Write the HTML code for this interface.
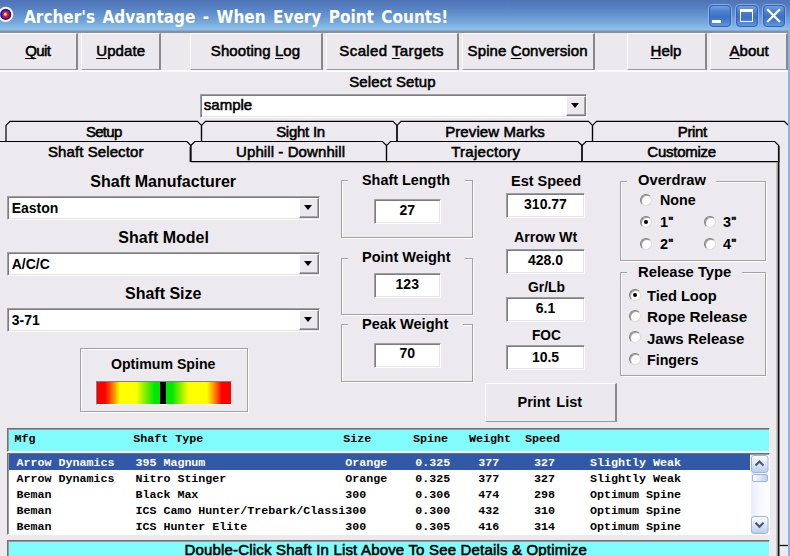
<!DOCTYPE html>
<html><head><meta charset="utf-8"><title>Archer's Advantage</title>
<style>
*{box-sizing:border-box;margin:0;padding:0}
html,body{width:790px;height:556px;overflow:hidden;background:#eceaee;font-family:"Liberation Sans",sans-serif;font-size:15px;color:#000}
.a{position:absolute}
u{text-decoration:underline;text-decoration-skip-ink:none;text-underline-offset:1.5px;text-decoration-thickness:1px}
.tb{background:#ebe9ed;border-top:1px solid #fff;border-left:1px solid #fff;border-right:2px solid #88888c;border-bottom:1.5px solid #98989c}
.sunk{background:#fff;border:1px solid;border-color:#a0a0a4 #fff #fff #a0a0a4;box-shadow:inset 1px 1px 0 #7c7c80,inset -1px -1px 0 #e6e6ea}
.arr{position:absolute;background:#ebe9ed;border:1px solid;border-color:#fff #7e7e82 #7e7e82 #fff;box-shadow:inset -1px -1px 0 #a6a6aa}
.arr:after{content:"";position:absolute;left:3.8px;top:6px;border:4.6px solid transparent;border-top:5px solid #000;border-bottom:0}
.grp{border:1px solid #a2a2a2;box-shadow:1px 1px 0 #fff,inset 1px 1px 0 #fff}
.gap{background:#eceaee;height:3px}
.rad{width:12px;height:12px;border-radius:50%;background:#fff;border:1px solid;border-color:#7c7c7c #dcdcdc #dcdcdc #7c7c7c;box-shadow:inset 1px 1px 0 #a0a0a0}
.dot{width:4px;height:4px;border-radius:50%;background:#000}
</style></head><body>
<div class="a" style="left:0;top:0;width:790px;height:31px;background:linear-gradient(#4f74b6 0%,#5580c2 25%,#6494d0 50%,#78abdc 75%,#8ec2ec 95%,#6f9fe0 100%)"></div>
<svg class="a" style="left:0;top:0" width="16" height="31"><circle cx="5.7" cy="14.4" r="7.6" fill="#fff"/><circle cx="5.7" cy="14.4" r="5.6" fill="#1010e0"/><circle cx="5.7" cy="14.4" r="3.6" fill="#f01020"/><circle cx="5.4" cy="14.2" r="1.6" fill="#fff000"/></svg>
<div class="a" style="left:24px;top:9.04px;font-size:17px;line-height:1;color:#fff;font-family:'DejaVu Sans Condensed','Liberation Sans',sans-serif;white-space:pre;font-weight:bold;word-spacing:2.1px;">Archer's Advantage - When Every Point Counts!</div>
<div class="a" style="left:708.5px;top:4.5px;width:22px;height:22px;border-radius:4px;border:1px solid #3a5eb4;box-shadow:0 0 0 1px rgba(150,190,240,.75);background:linear-gradient(#6d9fe2 0%,#4a7fce 30%,#3c70c4 55%,#4a82d0 80%,#5f98de 100%)"></div>
<div class="a" style="left:735.5px;top:4.5px;width:22px;height:22px;border-radius:4px;border:1px solid #3a5eb4;box-shadow:0 0 0 1px rgba(150,190,240,.75);background:linear-gradient(#6d9fe2 0%,#4a7fce 30%,#3c70c4 55%,#4a82d0 80%,#5f98de 100%)"></div>
<div class="a" style="left:762.5px;top:4.5px;width:22px;height:22px;border-radius:4px;border:1px solid #3a5eb4;box-shadow:0 0 0 1px rgba(150,190,240,.75);background:linear-gradient(#6d9fe2 0%,#4a7fce 30%,#3c70c4 55%,#4a82d0 80%,#5f98de 100%)"></div>
<div class="a" style="left:712px;top:20px;width:9px;height:3px;background:#fff"></div>
<div class="a" style="left:740px;top:9px;width:13px;height:13px;border:1px solid #fff;border-top:3px solid #fff"></div>
<svg class="a" style="left:762px;top:4px" width="24" height="24"><path d="M5.2 5.2 L18 18 M18 5.2 L5.2 18" stroke="#fff" stroke-width="2.3" fill="none"/></svg>
<div class="a" style="left:0;top:31px;width:790px;height:41px;background:#ebe9ed;border-top:2px solid #8e8e90;border-bottom:2px solid #fcfcfd"></div>
<div class="a tb" style="left:-1px;top:33px;width:79px;height:37px"></div>
<div class="a" style="left:-62.2px;top:42.70px;font-size:15px;line-height:1;color:#000;font-family:'Liberation Sans',sans-serif;white-space:pre;-webkit-text-stroke:0.55px #000;letter-spacing:-0.537px;width:200px;text-align:center;"><u>Q</u>uit</div>
<div class="a tb" style="left:81px;top:33px;width:80px;height:37px"></div>
<div class="a" style="left:20.700000000000003px;top:42.70px;font-size:15px;line-height:1;color:#000;font-family:'Liberation Sans',sans-serif;white-space:pre;-webkit-text-stroke:0.55px #000;letter-spacing:0.106px;width:200px;text-align:center;"><u>U</u>pdate</div>
<div class="a tb" style="left:190px;top:33px;width:133px;height:37px"></div>
<div class="a" style="left:155.5px;top:42.70px;font-size:15px;line-height:1;color:#000;font-family:'Liberation Sans',sans-serif;white-space:pre;-webkit-text-stroke:0.55px #000;letter-spacing:0.072px;width:200px;text-align:center;">Shooting <u>L</u>og</div>
<div class="a tb" style="left:326px;top:33px;width:133px;height:37px"></div>
<div class="a" style="left:291.6px;top:42.70px;font-size:15px;line-height:1;color:#000;font-family:'Liberation Sans',sans-serif;white-space:pre;-webkit-text-stroke:0.55px #000;letter-spacing:0.396px;width:200px;text-align:center;">Scaled <u>T</u>argets</div>
<div class="a tb" style="left:462px;top:33px;width:133px;height:37px"></div>
<div class="a" style="left:427.6px;top:42.70px;font-size:15px;line-height:1;color:#000;font-family:'Liberation Sans',sans-serif;white-space:pre;-webkit-text-stroke:0.55px #000;letter-spacing:0.1px;width:200px;text-align:center;">Spine <u>C</u>onversion</div>
<div class="a tb" style="left:627px;top:33px;width:80px;height:37px"></div>
<div class="a" style="left:566px;top:42.70px;font-size:15px;line-height:1;color:#000;font-family:'Liberation Sans',sans-serif;white-space:pre;-webkit-text-stroke:0.55px #000;width:200px;text-align:center;"><u>H</u>elp</div>
<div class="a tb" style="left:710px;top:33px;width:78px;height:37px"></div>
<div class="a" style="left:649.2px;top:42.70px;font-size:15px;line-height:1;color:#000;font-family:'Liberation Sans',sans-serif;white-space:pre;-webkit-text-stroke:0.55px #000;width:200px;text-align:center;"><u>A</u>bout</div>
<div class="a" style="left:349.2px;top:73.80px;font-size:15px;line-height:1;color:#000;font-family:'Liberation Sans',sans-serif;white-space:pre;-webkit-text-stroke:0.55px #000;letter-spacing:0.122px;">Select Setup</div>
<div class="a sunk" style="left:200px;top:94px;width:387px;height:24px"><div class="arr" style="right:0.5px;top:1px;width:19.3px;height:20px"></div></div>
<div class="a" style="left:203.8px;top:96.70px;font-size:15px;line-height:1;-webkit-text-stroke:0.55px #000;color:#000;font-family:'Liberation Sans',sans-serif;white-space:pre;">sample</div>
<svg class="a" style="left:0;top:0" width="790" height="556" fill="none" stroke="#000" stroke-width="1.2"><path d="M6 141.5 L6 125.4 L10 121.4 L197.5 121.4 L201.5 125.4 L201.5 141.5"/><path d="M201.5 141.5 L201.5 125.4 L205.5 121.4 L393 121.4 L397 125.4 L397 141.5"/><path d="M397 141.5 L397 125.4 L401 121.4 L588.5 121.4 L592.5 125.4 L592.5 141.5"/><path d="M592.5 141.5 L592.5 125.4 L596.5 121.4 L784.4 121.4 L788 125"/><path d="M779.5 545.5 L788 545.5" stroke="#111" stroke-width="1.3"/><path d="M190.8 162 L190.8 145.5 L194.8 141.5 L382.5 141.5 L386.5 145.5 L386.5 162"/><path d="M386.5 162 L386.5 145.5 L390.5 141.5 L578 141.5 L582 145.5 L582 162"/><path d="M582 162 L582 145.5 L586 141.5 L774.7 141.5 L778.7 145.5 L778.7 162"/><path d="M0 141.5 L187 141.5 L190.8 145.5 L190.8 162" /><path d="M189.6 147 L189.6 162" stroke="#888" stroke-width="1"/><path d="M190.8 161.7 L778 161.7"/><path d="M778.7 146 L778.7 556" stroke-width="1.6" stroke="#111"/><path d="M777.2 162.5 L777.2 556" stroke="#8c8c8c" stroke-width="1.2"/></svg>
<div class="a" style="left:3.799999999999997px;top:123.60px;font-size:15px;line-height:1;color:#000;font-family:'Liberation Sans',sans-serif;white-space:pre;-webkit-text-stroke:0.55px #000;letter-spacing:-0.675px;width:200px;text-align:center;">Setup</div>
<div class="a" style="left:200.5px;top:123.60px;font-size:15px;line-height:1;color:#000;font-family:'Liberation Sans',sans-serif;white-space:pre;-webkit-text-stroke:0.55px #000;letter-spacing:-0.267px;width:200px;text-align:center;">Sight In</div>
<div class="a" style="left:395px;top:123.60px;font-size:15px;line-height:1;color:#000;font-family:'Liberation Sans',sans-serif;white-space:pre;-webkit-text-stroke:0.55px #000;letter-spacing:0.104px;width:200px;text-align:center;">Preview Marks</div>
<div class="a" style="left:592.3px;top:123.60px;font-size:15px;line-height:1;color:#000;font-family:'Liberation Sans',sans-serif;white-space:pre;-webkit-text-stroke:0.55px #000;letter-spacing:-0.361px;width:200px;text-align:center;">Print</div>
<div class="a" style="left:-4.299999999999997px;top:144.30px;font-size:15px;line-height:1;color:#000;font-family:'Liberation Sans',sans-serif;white-space:pre;-webkit-text-stroke:0.55px #000;letter-spacing:0.099px;width:200px;text-align:center;">Shaft Selector</div>
<div class="a" style="left:190.60000000000002px;top:143.60px;font-size:15px;line-height:1;color:#000;font-family:'Liberation Sans',sans-serif;white-space:pre;-webkit-text-stroke:0.55px #000;letter-spacing:0.085px;width:200px;text-align:center;">Uphill - Downhill</div>
<div class="a" style="left:385.7px;top:143.60px;font-size:15px;line-height:1;color:#000;font-family:'Liberation Sans',sans-serif;white-space:pre;-webkit-text-stroke:0.55px #000;letter-spacing:0.286px;width:200px;text-align:center;">Trajectory</div>
<div class="a" style="left:581.6px;top:143.60px;font-size:15px;line-height:1;color:#000;font-family:'Liberation Sans',sans-serif;white-space:pre;-webkit-text-stroke:0.55px #000;letter-spacing:-0.257px;width:200px;text-align:center;">Customize</div>
<div class="a" style="left:90.3px;top:174.16px;font-size:16px;line-height:1;color:#000;font-family:'Liberation Sans',sans-serif;white-space:pre;font-weight:bold;">Shaft Manufacturer</div>
<div class="a sunk" style="left:7px;top:196px;width:313px;height:24px"><div class="arr" style="right:0.5px;top:1px;width:19.3px;height:20px"></div></div>
<div class="a" style="left:11.7px;top:201.05px;font-size:14px;line-height:1;color:#000;font-family:'Liberation Sans',sans-serif;white-space:pre;font-weight:bold;">Easton</div>
<div class="a" style="left:118.3px;top:230.46px;font-size:16px;line-height:1;color:#000;font-family:'Liberation Sans',sans-serif;white-space:pre;font-weight:bold;">Shaft Model</div>
<div class="a sunk" style="left:7px;top:252px;width:313px;height:24px"><div class="arr" style="right:0.5px;top:1px;width:19.3px;height:20px"></div></div>
<div class="a" style="left:11.7px;top:257.05px;font-size:14px;line-height:1;color:#000;font-family:'Liberation Sans',sans-serif;white-space:pre;font-weight:bold;">A/C/C</div>
<div class="a" style="left:125px;top:286.46px;font-size:16px;line-height:1;color:#000;font-family:'Liberation Sans',sans-serif;white-space:pre;font-weight:bold;">Shaft Size</div>
<div class="a sunk" style="left:7px;top:308px;width:313px;height:24px"><div class="arr" style="right:0.5px;top:1px;width:19.3px;height:20px"></div></div>
<div class="a" style="left:11.7px;top:313.05px;font-size:14px;line-height:1;color:#000;font-family:'Liberation Sans',sans-serif;white-space:pre;font-weight:bold;">3-71</div>
<div class="a grp" style="left:79.5px;top:348px;width:168.0px;height:63.5px"></div>
<div class="a" style="left:110.6px;top:356.85px;font-size:14px;line-height:1;color:#000;font-family:'Liberation Sans',sans-serif;white-space:pre;font-weight:bold;transform:scaleX(1.0092);transform-origin:0 0;">Optimum Spine</div>
<div class="a" style="left:95.5px;top:380.5px;width:136px;height:24px;border:1px solid;border-color:#808080 #fff #fff #808080;background:linear-gradient(90deg,#ff0000 0%,#ff0000 6%,#ff8000 12%,#ffff00 17%,#ffff00 29%,#80f000 36%,#00e800 43%,#00e800 56%,#80f000 62%,#ffff00 68%,#ffff00 82%,#ff8000 88%,#ff0000 93%,#ff0000 100%)"></div>
<div class="a" style="left:160px;top:381.5px;width:6px;height:22px;background:#000"></div>
<div class="a grp" style="left:341px;top:180px;width:132px;height:57.5px"></div>
<div class="a gap" style="left:348px;top:179.5px;width:116.5px"></div>
<div class="a" style="left:362.4px;top:172.95px;font-size:14px;line-height:1;color:#000;font-family:'Liberation Sans',sans-serif;white-space:pre;font-weight:bold;transform:scaleX(1.0287);transform-origin:0 0;">Shaft Length</div>
<div class="a sunk" style="left:374px;top:199px;width:66.5px;height:24.5px"></div>
<div class="a" style="left:374px;top:202.75px;font-size:14px;line-height:1;color:#000;font-family:'Liberation Sans',sans-serif;white-space:pre;font-weight:bold;width:66.5px;text-align:center;">27</div>
<div class="a grp" style="left:341px;top:257.5px;width:132px;height:57.0px"></div>
<div class="a gap" style="left:348px;top:257.0px;width:116.5px"></div>
<div class="a" style="left:362.4px;top:249.75px;font-size:14px;line-height:1;color:#000;font-family:'Liberation Sans',sans-serif;white-space:pre;font-weight:bold;transform:scaleX(1.0377);transform-origin:0 0;">Point Weight</div>
<div class="a sunk" style="left:374px;top:273px;width:66.5px;height:24.5px"></div>
<div class="a" style="left:374px;top:276.75px;font-size:14px;line-height:1;color:#000;font-family:'Liberation Sans',sans-serif;white-space:pre;font-weight:bold;width:66.5px;text-align:center;">123</div>
<div class="a grp" style="left:341px;top:324px;width:132px;height:57.5px"></div>
<div class="a gap" style="left:348px;top:323.5px;width:115px"></div>
<div class="a" style="left:362.4px;top:316.65px;font-size:14px;line-height:1;color:#000;font-family:'Liberation Sans',sans-serif;white-space:pre;font-weight:bold;transform:scaleX(1.0399);transform-origin:0 0;">Peak Weight</div>
<div class="a sunk" style="left:374px;top:343px;width:66.5px;height:24.5px"></div>
<div class="a" style="left:374px;top:346.35px;font-size:14px;line-height:1;color:#000;font-family:'Liberation Sans',sans-serif;white-space:pre;font-weight:bold;width:66.5px;text-align:center;">70</div>
<div class="a" style="left:510.7px;top:173.95px;font-size:14px;line-height:1;color:#000;font-family:'Liberation Sans',sans-serif;white-space:pre;font-weight:bold;transform:scaleX(1.0341);transform-origin:0 0;">Est Speed</div>
<div class="a sunk" style="left:506px;top:193px;width:79px;height:24.5px"></div>
<div class="a" style="left:506px;top:197.05px;font-size:14px;line-height:1;color:#000;font-family:'Liberation Sans',sans-serif;white-space:pre;font-weight:bold;width:79px;text-align:center;">310.77</div>
<div class="a" style="left:514px;top:229.85px;font-size:14px;line-height:1;color:#000;font-family:'Liberation Sans',sans-serif;white-space:pre;font-weight:bold;transform:scaleX(1.0175);transform-origin:0 0;">Arrow Wt</div>
<div class="a sunk" style="left:506px;top:249px;width:79px;height:24.5px"></div>
<div class="a" style="left:506px;top:252.65px;font-size:14px;line-height:1;color:#000;font-family:'Liberation Sans',sans-serif;white-space:pre;font-weight:bold;width:79px;text-align:center;">428.0</div>
<div class="a" style="left:527.5px;top:280.35px;font-size:14px;line-height:1;color:#000;font-family:'Liberation Sans',sans-serif;white-space:pre;font-weight:bold;transform:scaleX(0.9911);transform-origin:0 0;">Gr/Lb</div>
<div class="a sunk" style="left:506px;top:297px;width:79px;height:24.5px"></div>
<div class="a" style="left:506px;top:301.35px;font-size:14px;line-height:1;color:#000;font-family:'Liberation Sans',sans-serif;white-space:pre;font-weight:bold;width:79px;text-align:center;">6.1</div>
<div class="a" style="left:531.9px;top:328.15px;font-size:14px;line-height:1;color:#000;font-family:'Liberation Sans',sans-serif;white-space:pre;font-weight:bold;transform:scaleX(0.9746);transform-origin:0 0;">FOC</div>
<div class="a sunk" style="left:506px;top:345px;width:79px;height:24.5px"></div>
<div class="a" style="left:506px;top:349.55px;font-size:14px;line-height:1;color:#000;font-family:'Liberation Sans',sans-serif;white-space:pre;font-weight:bold;width:79px;text-align:center;">10.5</div>
<div class="a tb" style="left:484.5px;top:383px;width:132.5px;height:39px"></div>
<div class="a" style="left:517.5px;top:394.63px;font-size:14.5px;line-height:1;color:#000;font-family:'Liberation Sans',sans-serif;white-space:pre;font-weight:bold;letter-spacing:-0.037px;word-spacing:2px;">Print List</div>
<div class="a grp" style="left:620.3px;top:180.5px;width:145.70000000000005px;height:80.5px"></div>
<div class="a gap" style="left:627px;top:180.0px;width:89px"></div>
<div class="a" style="left:637.8px;top:173.15px;font-size:14px;line-height:1;color:#000;font-family:'Liberation Sans',sans-serif;white-space:pre;font-weight:bold;transform:scaleX(1.0529);transform-origin:0 0;">Overdraw</div>
<div class="a rad" style="left:640.4px;top:194px"></div>
<div class="a" style="left:659.7px;top:193.05px;font-size:14px;line-height:1;color:#000;font-family:'Liberation Sans',sans-serif;white-space:pre;font-weight:bold;transform:scaleX(1.0200);transform-origin:0 0;">None</div>
<div class="a rad" style="left:640.4px;top:215.5px"></div>
<div class="a dot" style="left:644.4px;top:219.5px"></div>
<div class="a" style="left:659.7px;top:214.95px;font-size:14px;line-height:1;color:#000;font-family:'Liberation Sans',sans-serif;white-space:pre;font-weight:bold;transform:scaleX(1.03);transform-origin:0 0;">1<span style="font-size:10.5px;vertical-align:2.2px;margin-left:0.3px;-webkit-text-stroke:0.5px #000">&quot;</span></div>
<div class="a rad" style="left:703.8px;top:215.5px"></div>
<div class="a" style="left:722.7px;top:214.95px;font-size:14px;line-height:1;color:#000;font-family:'Liberation Sans',sans-serif;white-space:pre;font-weight:bold;transform:scaleX(1.03);transform-origin:0 0;">3<span style="font-size:10.5px;vertical-align:2.2px;margin-left:0.3px;-webkit-text-stroke:0.5px #000">&quot;</span></div>
<div class="a rad" style="left:640.4px;top:237.5px"></div>
<div class="a" style="left:659.7px;top:237.05px;font-size:14px;line-height:1;color:#000;font-family:'Liberation Sans',sans-serif;white-space:pre;font-weight:bold;transform:scaleX(1.03);transform-origin:0 0;">2<span style="font-size:10.5px;vertical-align:2.2px;margin-left:0.3px;-webkit-text-stroke:0.5px #000">&quot;</span></div>
<div class="a rad" style="left:703.8px;top:237.5px"></div>
<div class="a" style="left:722.7px;top:237.05px;font-size:14px;line-height:1;color:#000;font-family:'Liberation Sans',sans-serif;white-space:pre;font-weight:bold;transform:scaleX(1.03);transform-origin:0 0;">4<span style="font-size:10.5px;vertical-align:2.2px;margin-left:0.3px;-webkit-text-stroke:0.5px #000">&quot;</span></div>
<div class="a grp" style="left:620.3px;top:272.2px;width:145.70000000000005px;height:103.40000000000003px"></div>
<div class="a gap" style="left:627px;top:271.7px;width:114.5px"></div>
<div class="a" style="left:637.5px;top:264.95px;font-size:14px;line-height:1;color:#000;font-family:'Liberation Sans',sans-serif;white-space:pre;font-weight:bold;transform:scaleX(1.0547);transform-origin:0 0;">Release Type</div>
<div class="a rad" style="left:628.5px;top:289.2px"></div>
<div class="a dot" style="left:632.5px;top:293.2px"></div>
<div class="a" style="left:647.3px;top:288.85px;font-size:14px;line-height:1;color:#000;font-family:'Liberation Sans',sans-serif;white-space:pre;font-weight:bold;transform:scaleX(1.0462);transform-origin:0 0;">Tied Loop</div>
<div class="a rad" style="left:628.5px;top:310px"></div>
<div class="a" style="left:647.3px;top:310.15px;font-size:14px;line-height:1;color:#000;font-family:'Liberation Sans',sans-serif;white-space:pre;font-weight:bold;transform:scaleX(1.0923);transform-origin:0 0;">Rope Release</div>
<div class="a rad" style="left:628.5px;top:331.4px"></div>
<div class="a" style="left:647.3px;top:331.65px;font-size:14px;line-height:1;color:#000;font-family:'Liberation Sans',sans-serif;white-space:pre;font-weight:bold;transform:scaleX(1.0684);transform-origin:0 0;">Jaws Release</div>
<div class="a rad" style="left:628.5px;top:352.8px"></div>
<div class="a" style="left:647.3px;top:353.05px;font-size:14px;line-height:1;color:#000;font-family:'Liberation Sans',sans-serif;white-space:pre;font-weight:bold;transform:scaleX(1.0165);transform-origin:0 0;">Fingers</div>
<div class="a" style="left:6.5px;top:428px;width:763.5px;height:23.5px;background:#80fcfc;border:1px solid;border-color:#707070 #fff #fff #707070;box-shadow:inset 1px 1px 0 #9a9a9a"></div>
<div class="a" style="left:14.4px;top:433.91px;font-size:11.67px;line-height:1;color:#000;font-family:'Liberation Mono','DejaVu Sans Mono',monospace;white-space:pre;font-weight:bold;">Mfg              Shaft Type                    Size      Spine   Weight  Speed</div>
<div class="a" style="left:6.5px;top:452.5px;width:763.5px;height:82.5px;background:#fff;border:1px solid;border-color:#707070 #fff #fff #707070;box-shadow:inset 1px 1px 0 #9a9a9a"></div>
<div class="a" style="left:8.5px;top:454.2px;width:741.7px;height:15.6px;background:#3159a8"></div>
<div class="a" style="left:16.5px;top:458.01px;font-size:11.67px;line-height:1;color:#fff;font-family:'Liberation Mono','DejaVu Sans Mono',monospace;white-space:pre;font-weight:bold;">Arrow Dynamics   395 Magnum                    Orange    0.325    377     327     Slightly Weak</div>
<div class="a" style="left:16.5px;top:474.01px;font-size:11.67px;line-height:1;color:#000;font-family:'Liberation Mono','DejaVu Sans Mono',monospace;white-space:pre;font-weight:bold;">Arrow Dynamics   Nitro Stinger                 Orange    0.325    377     327     Slightly Weak</div>
<div class="a" style="left:16.5px;top:490.01px;font-size:11.67px;line-height:1;color:#000;font-family:'Liberation Mono','DejaVu Sans Mono',monospace;white-space:pre;font-weight:bold;">Beman            Black Max                     300       0.306    474     298     Optimum Spine</div>
<div class="a" style="left:16.5px;top:506.01px;font-size:11.67px;line-height:1;color:#000;font-family:'Liberation Mono','DejaVu Sans Mono',monospace;white-space:pre;font-weight:bold;">Beman            ICS Camo Hunter/Trebark/Classi300       0.300    432     310     Optimum Spine</div>
<div class="a" style="left:16.5px;top:522.01px;font-size:11.67px;line-height:1;color:#000;font-family:'Liberation Mono','DejaVu Sans Mono',monospace;white-space:pre;font-weight:bold;">Beman            ICS Hunter Elite              300       0.305    416     314     Optimum Spine</div>
<div class="a" style="left:751px;top:454.5px;width:17.5px;height:79px;background:linear-gradient(90deg,#e6eefb,#f6f9fe 50%,#fdfeff)"></div>
<svg class="a" style="left:751px;top:454.5px" width="18" height="18"><defs><linearGradient id="g1" x1="0" y1="0" x2="0" y2="1"><stop offset="0" stop-color="#fdfeff"/><stop offset="0.45" stop-color="#dfe9f9"/><stop offset="1" stop-color="#b8cceb"/></linearGradient></defs><rect x="0.5" y="0.5" width="16.5" height="17" rx="2.5" fill="url(#g1)" stroke="#a0b4da"/><path d="M4.5 10.5 L8.5 6.5 L12.5 10.5" fill="none" stroke="#4a566c" stroke-width="2.1"/></svg>
<svg class="a" style="left:751px;top:515.8px" width="18" height="18"><defs><linearGradient id="g0" x1="0" y1="0" x2="0" y2="1"><stop offset="0" stop-color="#fdfeff"/><stop offset="0.45" stop-color="#dfe9f9"/><stop offset="1" stop-color="#b8cceb"/></linearGradient></defs><rect x="0.5" y="0.5" width="16.5" height="17" rx="2.5" fill="url(#g0)" stroke="#a0b4da"/><path d="M4.5 6.8 L8.5 10.8 L12.5 6.8" fill="none" stroke="#4a566c" stroke-width="2.1"/></svg>
<div class="a" style="left:751.5px;top:473.5px;width:16.5px;height:8px;border:1px solid #a0b4da;border-radius:2px;background:linear-gradient(90deg,#fbfcff,#dbe6f8 50%,#bccfec)"></div>
<div class="a" style="left:6.5px;top:540px;width:763.5px;height:20px;background:#80fcfc;border:1px solid;border-color:#707070 #fff #fff #707070;box-shadow:inset 1px 1px 0 #9a9a9a"></div>
<div class="a" style="left:184.5px;top:541.80px;font-size:15px;line-height:1;color:#000;font-family:'Liberation Sans',sans-serif;white-space:pre;-webkit-text-stroke:0.55px #000;letter-spacing:0.175px;">Double-Click Shaft In List Above To See Details &amp; Optimize</div>
<div class="a" style="left:788px;top:31px;width:2px;height:525px;background:#86b2f0"></div>
</body></html>
